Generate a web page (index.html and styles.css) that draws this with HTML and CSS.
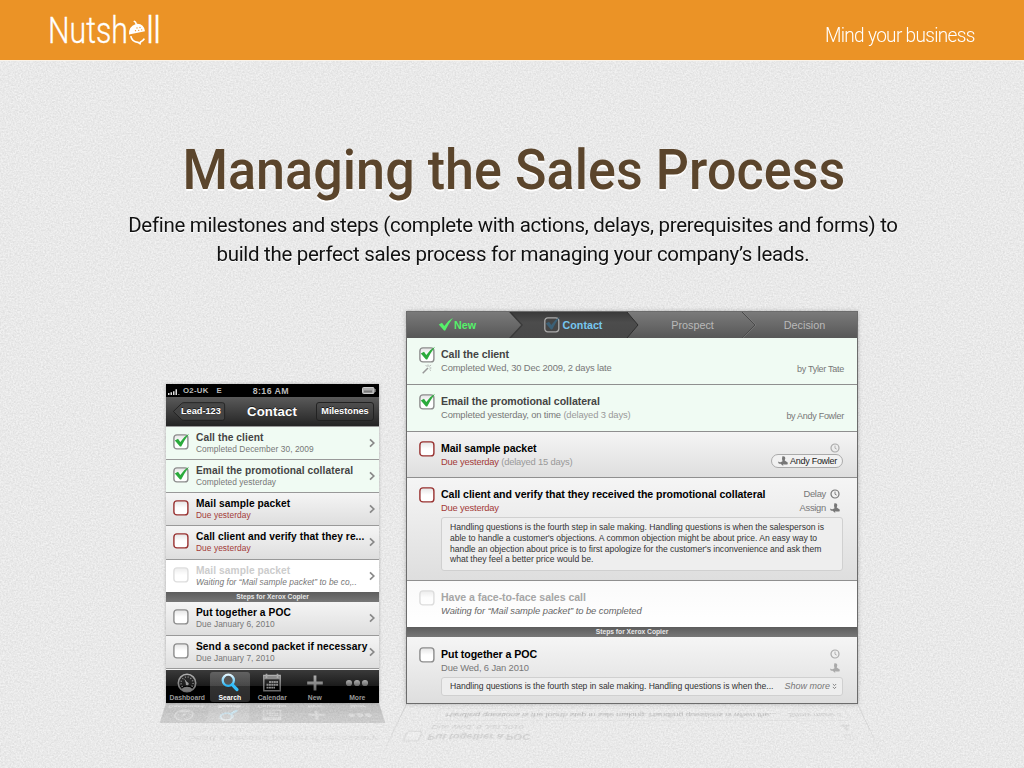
FILE: index.html
```html
<!DOCTYPE html>
<html lang="en">
<head>
<meta charset="utf-8">
<title>Nutshell – Managing the Sales Process</title>
<link rel="stylesheet" href="styles.css">
</head>
<body>
<svg class="defs" aria-hidden="true">
  <defs>
    <linearGradient id="boxFill" x1="0" y1="0" x2="0" y2="1"><stop offset="0" stop-color="#e4e4e4"/><stop offset=".5" stop-color="#fff"/></linearGradient>
    <linearGradient id="darkSeg" x1="0" y1="0" x2="0" y2="1"><stop offset="0" stop-color="#3a3a3a"/><stop offset=".4" stop-color="#4c4c4c"/><stop offset="1" stop-color="#484848"/></linearGradient>
    <linearGradient id="seg" x1="0" y1="0" x2="0" y2="1"><stop offset="0" stop-color="#7a7a7a"/><stop offset="1" stop-color="#575757"/></linearGradient>
    <linearGradient id="lens" x1="0" y1="0" x2="0" y2="1"><stop offset="0" stop-color="#e4f6ff"/><stop offset="1" stop-color="#27b4f4"/></linearGradient>
    <linearGradient id="steel" x1="0" y1="0" x2="0" y2="1"><stop offset="0" stop-color="#b0b0b0"/><stop offset="1" stop-color="#666"/></linearGradient>
    <symbol id="box" viewBox="0 0 16 16"><rect x=".9" y=".9" width="14" height="14" rx="3" fill="url(#boxFill)" stroke="currentColor" stroke-width="1.4"/></symbol>
    <symbol id="tick" viewBox="0 0 16 16"><path d="M1.800 7.600 5 5.800 7.300 8.900Q10.800 3.600 16 .8 11.500 7 8.200 13.400H7Z" fill="currentColor"/></symbol>
    <symbol id="clock" viewBox="0 0 10 10"><circle cx="5" cy="5" r="4" fill="none" stroke="currentColor" stroke-width="1.2"/><path d="M5 2.600V5.200L6.700 6.100" fill="none" stroke="currentColor" stroke-width=".9"/></symbol>
    <symbol id="person" viewBox="0 0 10 10"><path d="M4.400.300Q7.500-.1 7.300 2.300L6.700 4.600 9.700 6.500V8.300Q7.500 8.800 5.200 8.300V9.900L2.600 7.800H1.400Q0 7.300.2 5.600 1.300 6.500 2.600 6.200L4.500 5.200 4 2.700Z" fill="currentColor"/></symbol>
    <symbol id="chev" viewBox="0 0 6 10"><path d="M1 1.300 4.800 5 1 8.700" fill="none" stroke="currentColor" stroke-width="1.700"/></symbol>
    <symbol id="down2" viewBox="0 0 6 8"><path d="M1 1 3 3 5 1M1 4.500 3 6.500 5 4.500" fill="none" stroke="currentColor" stroke-width="1.100"/></symbol>
    <symbol id="wand" viewBox="0 0 10 10"><path d="M.7 9.300 6 4" stroke="currentColor" stroke-width="1.500"/><path d="M6 .6v2M9.300 4H7.600M8.800.9 7.400 2.500M3.800 1.200 4.800 2.500M8.800 6.500 7.700 5.600" stroke="currentColor" stroke-width=".8"/></symbol>
    <symbol id="dash" viewBox="0 0 20 20"><circle cx="10" cy="10" r="8.700" fill="none" stroke="url(#steel)" stroke-width="1.600"/><circle cx="10" cy="10" r="6" fill="none" stroke="#8d8d8d" stroke-width="1.500" stroke-dasharray="1 1.900" pathLength="37.700"/><path d="M4 16.200Q10 11.500 16 16.200L13 18.500H7Z" fill="#777"/><path d="M7.200 5.500 11 10.200 9.300 11.200Z" fill="#aaa"/><circle cx="10.200" cy="10.700" r="1.500" fill="#999"/></symbol>
    <symbol id="search" viewBox="0 0 20 20"><circle cx="8.300" cy="7.300" r="5.600" fill="#555" stroke="url(#lens)" stroke-width="2.300"/><path d="M12.200 11.700 17 16.600" stroke="#33bdfa" stroke-width="3.200" stroke-linecap="round"/></symbol>
    <symbol id="cal" viewBox="0 0 20 20"><path d="M1.800 2.500H18.200V17.800H1.800Z" fill="none" stroke="url(#steel)" stroke-width="1.400"/><path d="M2 3H18V6.300H2Z" fill="#8c8c8c"/><path d="M4.500.8V5M15.500.8V5" stroke="#aaa" stroke-width="1.700"/><path d="M7 9H16M4.500 11.800H16M4.500 14.600H13" stroke="#8c8c8c" stroke-width="1.900" stroke-dasharray="2 .4"/></symbol>
    <symbol id="plus" viewBox="0 0 20 20"><path d="M8.600 2.500h2.800v6.100H17.800v2.800H11.400V17.500H8.600V11.400H2.200V8.600H8.600Z" fill="url(#steel)"/></symbol>
    <symbol id="dots" viewBox="0 0 24 20"><g fill="url(#steel)"><circle cx="4" cy="10" r="3.100"/><circle cx="12" cy="10" r="3.100"/><circle cx="20" cy="10" r="3.100"/></g></symbol>
  </defs>
</svg>
<svg class="grain" aria-hidden="true"><filter id="grain" x="0" y="0" width="100%" height="100%" color-interpolation-filters="sRGB"><feTurbulence type="fractalNoise" baseFrequency=".6" numOctaves="3" seed="4"/><feColorMatrix values="1 1 1 0 -1  1 1 1 0 -1  1 1 1 0 -1  0 0 0 0 1"/></filter><rect width="100%" height="100%" filter="url(#grain)"/></svg>

<header class="banner">
  <svg class="logo" width="114" height="34" viewBox="0 0 114 34" role="img" aria-label="Nutshell">
    <text class="logo-text" x="-1" y="31" textLength="80" lengthAdjust="spacingAndGlyphs">Nutsh</text>
    <text class="logo-text" x="97" y="31" textLength="15" lengthAdjust="spacing">ll</text>
    <path d="M80 22.600Q79.500 14.500 86.500 12.300 86 10.500 84.200 9.300L85.500 8.500Q87.500 9.500 88 11.700 95 11.500 96 19.300Z" fill="#fff"/>
    <path d="M81.800 24.200Q83 30 89 30.400L91 31.700 91.500 30Q94 29 95.300 26.600" fill="none" stroke="#fff" stroke-width="1.700"/>
    <g fill="#eb9326"><circle cx="88" cy="16" r=".65"/><circle cx="91" cy="15.500" r=".65"/><circle cx="86.500" cy="18.700" r=".65"/><circle cx="89.700" cy="18.300" r=".65"/><circle cx="92.700" cy="17.800" r=".65"/></g>
  </svg>
  <p class="tagline">Mind your business</p>
</header>

<main class="slide">
  <h1 class="headline">Managing the Sales Process</h1>
  <p class="lede"><span class="lede-a">Define milestones and steps (complete with actions, delays, prerequisites and forms) to</span><br><span class="lede-b">build the perfect sales process for managing your company’s leads.</span></p>

  <div class="stage">
    <div class="device device-phone">
      <section class="phone">
        <div class="status">
          <svg width="12" height="8" viewBox="0 0 12 8"><path d="M0 6h1.500v2H0zM2.500 5.300H4V8H2.500zM5 4.300h1.500V8H5zM7.500 2.300H9V8H7.500z" fill="#ddd"/><path d="M10 7h1.500v1H10z" fill="#777"/></svg>
          <span class="carrier">O2-UK</span><span class="net">E</span><span class="time">8:16 AM</span>
          <svg class="battery" width="14" height="7" viewBox="0 0 14 7"><rect x=".5" y=".5" width="11.500" height="6" rx="1" fill="#aaa" stroke="#ccc"/><path d="M13 2v3" stroke="#bbb"/><path d="M2 4.500h8" stroke="#777" stroke-width="2"/></svg>
        </div>
        <div class="nav">
          <span class="back"><svg width="56" height="20" viewBox="0 0 56 20"><path d="M1 10 9.500 1.700Q10.500.7 12 .7H52.500Q55 .7 55 3V17Q55 19.300 52.500 19.300H12Q10.500 19.300 9.500 18.300Z" fill="#464646" stroke="#1d1d1d"/></svg><b>Lead-123</b></span>
          <strong class="nav-title">Contact</strong>
          <b class="nav-btn">Milestones</b>
        </div>
        <div class="item done"><span class="check"><svg><use href="#box"/></svg><svg class="tick"><use href="#tick"/></svg></span><div class="copy"><b>Call the client</b><small>Completed December 30, 2009</small></div><svg class="chev"><use href="#chev"/></svg></div>
        <div class="item done"><span class="check"><svg><use href="#box"/></svg><svg class="tick"><use href="#tick"/></svg></span><div class="copy"><b>Email the promotional collateral</b><small>Completed yesterday</small></div><svg class="chev"><use href="#chev"/></svg></div>
        <div class="item late"><span class="check"><svg><use href="#box"/></svg></span><div class="copy"><b>Mail sample packet</b><small>Due yesterday</small></div><svg class="chev"><use href="#chev"/></svg></div>
        <div class="item late tall"><span class="check"><svg><use href="#box"/></svg></span><div class="copy"><b>Call client and verify that they re...</b><small>Due yesterday</small></div><svg class="chev"><use href="#chev"/></svg></div>
        <div class="item waiting"><span class="check"><svg><use href="#box"/></svg></span><div class="copy"><b>Mail sample packet</b><small>Waiting for “Mail sample packet” to be co,..</small></div><svg class="chev"><use href="#chev"/></svg></div>
        <div class="divider">Steps for Xerox Copier</div>
        <div class="item tall"><span class="check"><svg><use href="#box"/></svg></span><div class="copy"><b>Put together a POC</b><small>Due January 6, 2010</small></div><svg class="chev"><use href="#chev"/></svg></div>
        <div class="item"><span class="check"><svg><use href="#box"/></svg></span><div class="copy"><b>Send a second packet if necessary</b><small>Due January 7, 2010</small></div><svg class="chev"><use href="#chev"/></svg></div>
        <div class="tabs">
          <span class="tab"><svg><use href="#dash"/></svg>Dashboard</span>
          <span class="tab on"><svg><use href="#search"/></svg>Search</span>
          <span class="tab"><svg><use href="#cal"/></svg>Calendar</span>
          <span class="tab"><svg><use href="#plus"/></svg>New</span>
          <span class="tab"><svg class="wide"><use href="#dots"/></svg>More</span>
        </div>
      </section>
      <div class="mirror mirror-phone" aria-hidden="true"><div class="flip">
        <div class="item"><span class="check"><svg><use href="#box"/></svg></span><div class="copy"><b>Send a second packet if necessary</b><small>Due January 7, 2010</small></div></div>
        <div class="tabs">
          <span class="tab"><svg><use href="#dash"/></svg>Dashboard</span>
          <span class="tab on"><svg><use href="#search"/></svg>Search</span>
          <span class="tab"><svg><use href="#cal"/></svg>Calendar</span>
          <span class="tab"><svg><use href="#plus"/></svg>New</span>
          <span class="tab"><svg class="wide"><use href="#dots"/></svg>More</span>
        </div>
      </div></div>
    </div>

    <div class="device">
      <section class="desk">
        <div class="trail">
          <svg class="trail-bg" viewBox="0 0 450 26"><path d="M102 0H220L231 13 220 26H102L114 13Z" fill="url(#darkSeg)"/><path d="M102 0 114 13 102 26" fill="none" stroke="#222" stroke-opacity=".4" stroke-width="3"/><path d="M101 0H102L114 13 102 26H101Z" fill="url(#seg)"/><path d="M220 0 231 13 220 26" fill="none" stroke="#2e2e2e"/><path d="M335 0 348 13 335 26" fill="none" stroke="#4a4a4a"/><path d="M336 0 349 13 336 26" fill="none" stroke="#858585" stroke-width=".5"/></svg>
          <span class="step new"><svg><use href="#tick"/></svg>New</span>
          <span class="step current"><span class="check"><svg viewBox="0 0 16 16"><rect x=".8" y=".8" width="14" height="14" rx="3" fill="#454545" stroke="#aaa" stroke-width="1.300"/></svg><svg class="tick"><use href="#tick"/></svg></span>Contact</span>
          <span class="step">Prospect</span>
          <span class="step last">Decision</span>
        </div>
        <div class="row done r47"><span class="check"><svg><use href="#box"/></svg><svg class="tick"><use href="#tick"/></svg><svg class="wand"><use href="#wand"/></svg></span><div class="copy"><b>Call the client</b><small>Completed Wed, 30 Dec 2009, 2 days late</small></div><div class="side by">by Tyler Tate</div></div>
        <div class="row done r47"><span class="check"><svg><use href="#box"/></svg><svg class="tick"><use href="#tick"/></svg></span><div class="copy"><b>Email the promotional collateral</b><small>Completed yesterday, on time <i>(delayed 3 days)</i></small></div><div class="side by">by Andy Fowler</div></div>
        <div class="row late r46"><span class="check"><svg><use href="#box"/></svg></span><div class="copy"><b>Mail sample packet</b><small>Due yesterday <i>(delayed 15 days)</i></small></div><div class="side pale"><span><svg><use href="#clock"/></svg></span><span class="pill"><svg><use href="#person"/></svg>Andy Fowler</span></div></div>
        <div class="row late r103"><span class="check"><svg><use href="#box"/></svg></span><div class="copy"><b>Call client and verify that they received the promotional collateral</b><small>Due yesterday</small></div><div class="side acts"><span>Delay <svg><use href="#clock"/></svg></span><span>Assign <svg><use href="#person"/></svg></span></div>
          <p class="note">Handling questions is the fourth step in sale making. Handling questions is when the salesperson is<br>able to handle a customer's objections. A common objection might be about price. An easy way to<br>handle an objection about price is to first apologize for the customer's inconvenience and ask them<br>what they feel a better price would be.</p></div>
        <div class="row waiting r46"><span class="check"><svg><use href="#box"/></svg></span><div class="copy"><b>Have a face-to-face sales call</b><small>Waiting for “Mail sample packet” to be completed</small></div></div>
        <div class="divider">Steps for Xerox Copier</div>
        <div class="row r66"><span class="check"><svg><use href="#box"/></svg></span><div class="copy"><b>Put together a POC</b><small>Due Wed, 6 Jan 2010</small></div><div class="side pale acts"><span><svg><use href="#clock"/></svg></span><span><svg><use href="#person"/></svg></span></div>
          <p class="note short"><span>Handling questions is the fourth step in sale making. Handling questions is when the...</span><em>Show more<svg><use href="#down2"/></svg></em></p></div>
      </section>
      <div class="mirror mirror-desk" aria-hidden="true"><div class="flip">
        <div class="row r66"><span class="check"><svg><use href="#box"/></svg></span><div class="copy"><b>Put together a POC</b><small>Due Wed, 6 Jan 2010</small></div><div class="side pale acts"><span><svg><use href="#clock"/></svg></span><span><svg><use href="#person"/></svg></span></div>
          <p class="note short"><span>Handling questions is the fourth step in sale making. Handling questions is when the...</span><em>Show more<svg><use href="#down2"/></svg></em></p></div>
      </div></div>
    </div>
  </div>
</main>
</body>
</html>
```

FILE: styles.css
```css
* { box-sizing: border-box; }
body {
  margin: 0;
  width: 1024px;
  height: 768px;
  overflow: hidden;
  position: relative;
  background: #f2f2f2;
  font-family: "Liberation Sans", Arial, sans-serif;
}
.defs { position: absolute; width: 0; height: 0; }
.grain { position: absolute; inset: 0; width: 100%; height: 100%; opacity: .07; pointer-events: none; }

/* Banner */
.banner {
  position: relative;
  height: 61px;
  padding: 0 49px;
  background: #eb9326;
  border-bottom: 1px solid #fbf3e8;
  display: flex;
  justify-content: space-between;
}
.logo { margin-top: 12px; overflow: visible; }
.logo-text { font: 300 36px Roboto, sans-serif; fill: #fff; stroke: #fff; stroke-width: .3px; }
.tagline {
  margin: 23px 0 0;
  font: 300 20px/24px Roboto, sans-serif;
  letter-spacing: -.7px;
  color: #fff;
  transform: scaleX(.95);
  transform-origin: 100% 0;
}

/* Headline */
.slide { position: relative; }
.headline {
  margin: 0;
  padding: 77px 0 0 4px;
  text-align: center;
  font: 500 55px/64px Roboto, sans-serif;
  letter-spacing: .1px;
  color: #5b452c;
  text-shadow: 0 2px 1px #fff;
  white-space: nowrap;
  transform: scaleX(.945);
}
.lede {
  margin: 9px 0 0;
  padding-left: 2px;
  text-align: center;
  font: 400 21px/29px Roboto, sans-serif;
  color: #111;
  text-shadow: 0 1px 1px #fff;
  white-space: nowrap;
  letter-spacing: -.3px;
  transform: scaleX(.975);
}

.stage {
  display: flex;
  align-items: flex-end;
  gap: 27px;
  margin-top: 42px;
  padding-left: 166px;
  height: 393px;
}
.device { position: relative; }
.device-phone { margin-bottom: 1px; }

/* Shared pieces */
.check { position: relative; flex: none; width: 16px; height: 16px; color: #8c8c8c; }
.check svg { display: block; width: 16px; height: 16px; }
.check .tick { position: absolute; left: 0; top: -1px; color: #2bab3c; }
.check .wand { position: absolute; left: 3px; top: 17px; width: 10px; height: 10px; color: #999; }
.late .check { color: #98302f; }
.waiting .check { color: #ccc; opacity: .65; }
.copy b, .copy small { display: block; white-space: nowrap; }
.divider {
  height: 10px;
  background: linear-gradient(#5d5d5d, #777);
  color: #e8e8e8;
  font-size: 6.7px;
  font-weight: bold;
  line-height: 10px;
  text-align: center;
}

/* Phone */
.phone { width: 213px; height: 319px; background: #f5f5f5; box-shadow: 0 0 3px rgba(0,0,0,.25); }
.status {
  position: relative;
  height: 13px;
  padding: 0 3px 0 2px;
  display: flex;
  align-items: center;
  background: #000;
  color: #bbb;
  font-size: 7.8px;
  font-weight: bold;
}
.carrier { margin-left: 3px; letter-spacing: .25px; }
.net { margin-left: 8px; }
.time { margin-left: 31px; font-size: 8.8px; letter-spacing: .4px; }
.battery { margin-left: auto; }
.nav {
  height: 30px;
  padding: 0 5px;
  display: flex;
  align-items: center;
  justify-content: space-between;
  background: linear-gradient(#5a5a5a, #242424);
  border-bottom: 1px solid #999;
  color: #fff;
  text-shadow: 0 -1px 0 rgba(0,0,0,.6);
}
.back { display: grid; width: 56px; }
.back > * { grid-area: 1 / 1; }
.back svg { height: 19px; opacity: .85; }
.back b { font-size: 9.2px; line-height: 19px; padding-left: 10px; z-index: 1; }
.nav-title { font-size: 13.2px; margin-left: 1px; letter-spacing: .1px; }
.nav-btn {
  width: 58px; height: 19px;
  border: 1px solid #222; border-radius: 3px;
  background: linear-gradient(#4e4e4e, #333);
  font-size: 9.2px; line-height: 17px; text-align: center;
}
.item {
  height: 33px;
  padding: 4px 4px 0 7px;
  display: flex;
  background: linear-gradient(#f5f5f5, #dedede);
  border-bottom: 1px solid #999;
}
.item.tall { height: 34px; }
.item.done { background: #f0fbf3; }
.item.waiting { height: 32px; background: #fff; border-bottom: 0; }
.item .check { margin-top: 3px; }
.item .copy { margin-left: 7px; }
.item b { font-size: 10.2px; line-height: 13px; letter-spacing: .08px; color: #000; }
.item small { font-size: 8.4px; line-height: 10px; letter-spacing: .05px; color: #777; }
.item.done b { color: #444; }
.item.late small { color: #a33a38; }
.item.waiting b { color: #ccc; }
.item.waiting small { font-style: italic; }
.item .copy { width: 172px; }
.item .chev { width: 6px; height: 10px; margin: 7px 0 0 auto; flex: none; color: #888; }
.tabs {
  margin-top: 1px;
  height: 33px;
  display: flex;
  background: linear-gradient(#3a3a3a, #1a1a1a 50%, #000 50%);
}
.tab {
  flex: 0 0 42.500px;
  display: flex;
  flex-direction: column;
  align-items: center;
  padding-top: 3px;
  font-size: 6.8px;
  font-weight: bold;
  line-height: 8px;
  color: #999;
}
.tab svg { width: 20px; height: 20px; margin-bottom: 1px; }
.tab svg.wide { width: 24px; }
.tab.on { flex-basis: 40.500px; background: linear-gradient(rgba(255,255,255,.22), rgba(255,255,255,.17)); border-radius: 3px; margin: 2px 1px 1px; padding-top: 1px; color: #fff; }

/* Desktop panel */
.desk { width: 452px; height: 393px; border: 1px solid #6c6c6c; box-shadow: 0 0 4px rgba(0,0,0,.25); }
.trail {
  position: relative;
  height: 26px;
  display: grid;
  grid-template-columns: 102px 132px 103px 113px;
  background: linear-gradient(#7a7a7a, #575757);
}
.trail-bg { position: absolute; inset: 0; width: 450px; height: 26px; }
.step {
  position: relative;
  display: flex;
  align-items: center;
  justify-content: center;
  font-size: 10.8px;
  color: #b9b9b9;
}
.step.new { gap: 1px; padding-right: 3px; color: #55f26a; font-weight: bold; font-size: 10.7px; }
.step.new svg { width: 16px; height: 16px; }
.step.current { gap: 3px; padding-right: 4px; color: #76c7f0; font-weight: bold; font-size: 10.7px; }
.step.current .tick { color: #3c6076; }
.step.last { padding-left: 8px; }
.row {
  position: relative;
  display: grid;
  grid-template-columns: 16px 1fr auto;
  column-gap: 6px;
  align-content: start;
  padding: 9px 14px 0 12px;
  background: linear-gradient(#f5f5f5, #dedede);
  border-bottom: 1px solid #8f8f8f;
}
.r47 { height: 47px; }
.r46 { height: 46px; }
.r103 { height: 103px; }
.r66 { height: 66px; padding-top: 10px; border-bottom: 0; }
.row.done { background: #f0fbf3; }
.row.waiting { background: linear-gradient(#fafafa, #fff); border-bottom: 0; }
.row b { font-size: 10.6px; line-height: 14px; letter-spacing: -.06px; color: #000; }
.row small { font-size: 9.4px; line-height: 14px; letter-spacing: -.14px; color: #777; }
.row.done b { color: #444; }
.row i { font-style: normal; color: #999; }
.row.late small { color: #a33a38; letter-spacing: -.2px; }
.row.late small i { color: #999; }
.row.waiting b { color: #a6a6a6; }
.row.waiting small { font-style: italic; letter-spacing: -.05px; color: #666; }
.side {
  display: flex;
  flex-direction: column;
  align-items: flex-end;
  font-size: 9px;
  line-height: 14px;
  letter-spacing: -.28px;
  color: #777;
}
.side.by { padding-top: 15px; margin-right: -1px; }
.side > span { display: flex; align-items: center; height: 14px; gap: 4px; padding-right: 3px; }
.side svg { width: 10px; height: 10px; }
.side.pale { color: #aaa; }
.side.acts { font-size: 9.4px; }
.side .pill {
  margin-top: -1px;
  padding: 0 5px 0 6px;
  gap: 2px;
  border: 1px solid #aaa;
  border-radius: 7px;
  background: #f1f1f1;
  color: #222;
}
.pill svg { color: #777; }
.note {
  grid-column: 2 / -1;
  margin: 2px 0 0;
  padding: 4px 8px;
  height: 54px;
  border: 1px solid #d0d0d0;
  border-radius: 3px;
  background: #eee;
  color: #333;
  font-size: 8.6px;
  line-height: 10.8px;
  letter-spacing: -.035px;
  white-space: nowrap;
}
.note.short { display: flex; justify-content: space-between; height: 19px; padding: 3px 5px 0 8px; letter-spacing: -.045px; }
.note em { color: #777; font-size: 9px; letter-spacing: 0; display: flex; align-items: flex-start; gap: 2px; }
.note em svg { width: 5px; height: 7px; margin-top: 2px; }

/* Floor reflections */
.mirror { position: absolute; left: 0; top: 100%; width: 100%; transform-origin: 50% 0; }
.flip { transform: scaleY(-1); }
.mirror-phone { transform: perspective(477px) rotateX(55deg); }
.mirror-phone .tabs { opacity: .16; margin-top: 0; }
.mirror-phone .item { background: none; border: 0; opacity: .05; }
.mirror-desk { transform: perspective(583px) rotateX(51deg); }
.mirror-desk .flip { border: solid rgba(0,0,0,.3); border-width: 0 1px; opacity: .35; -webkit-mask-image: linear-gradient(rgba(0,0,0,.25), #000); mask-image: linear-gradient(rgba(0,0,0,.25), #000); }
.mirror-desk .row { background: none; }
.mirror-desk .row b { color: #444; }
.mirror-desk .note { background: none; }
```
